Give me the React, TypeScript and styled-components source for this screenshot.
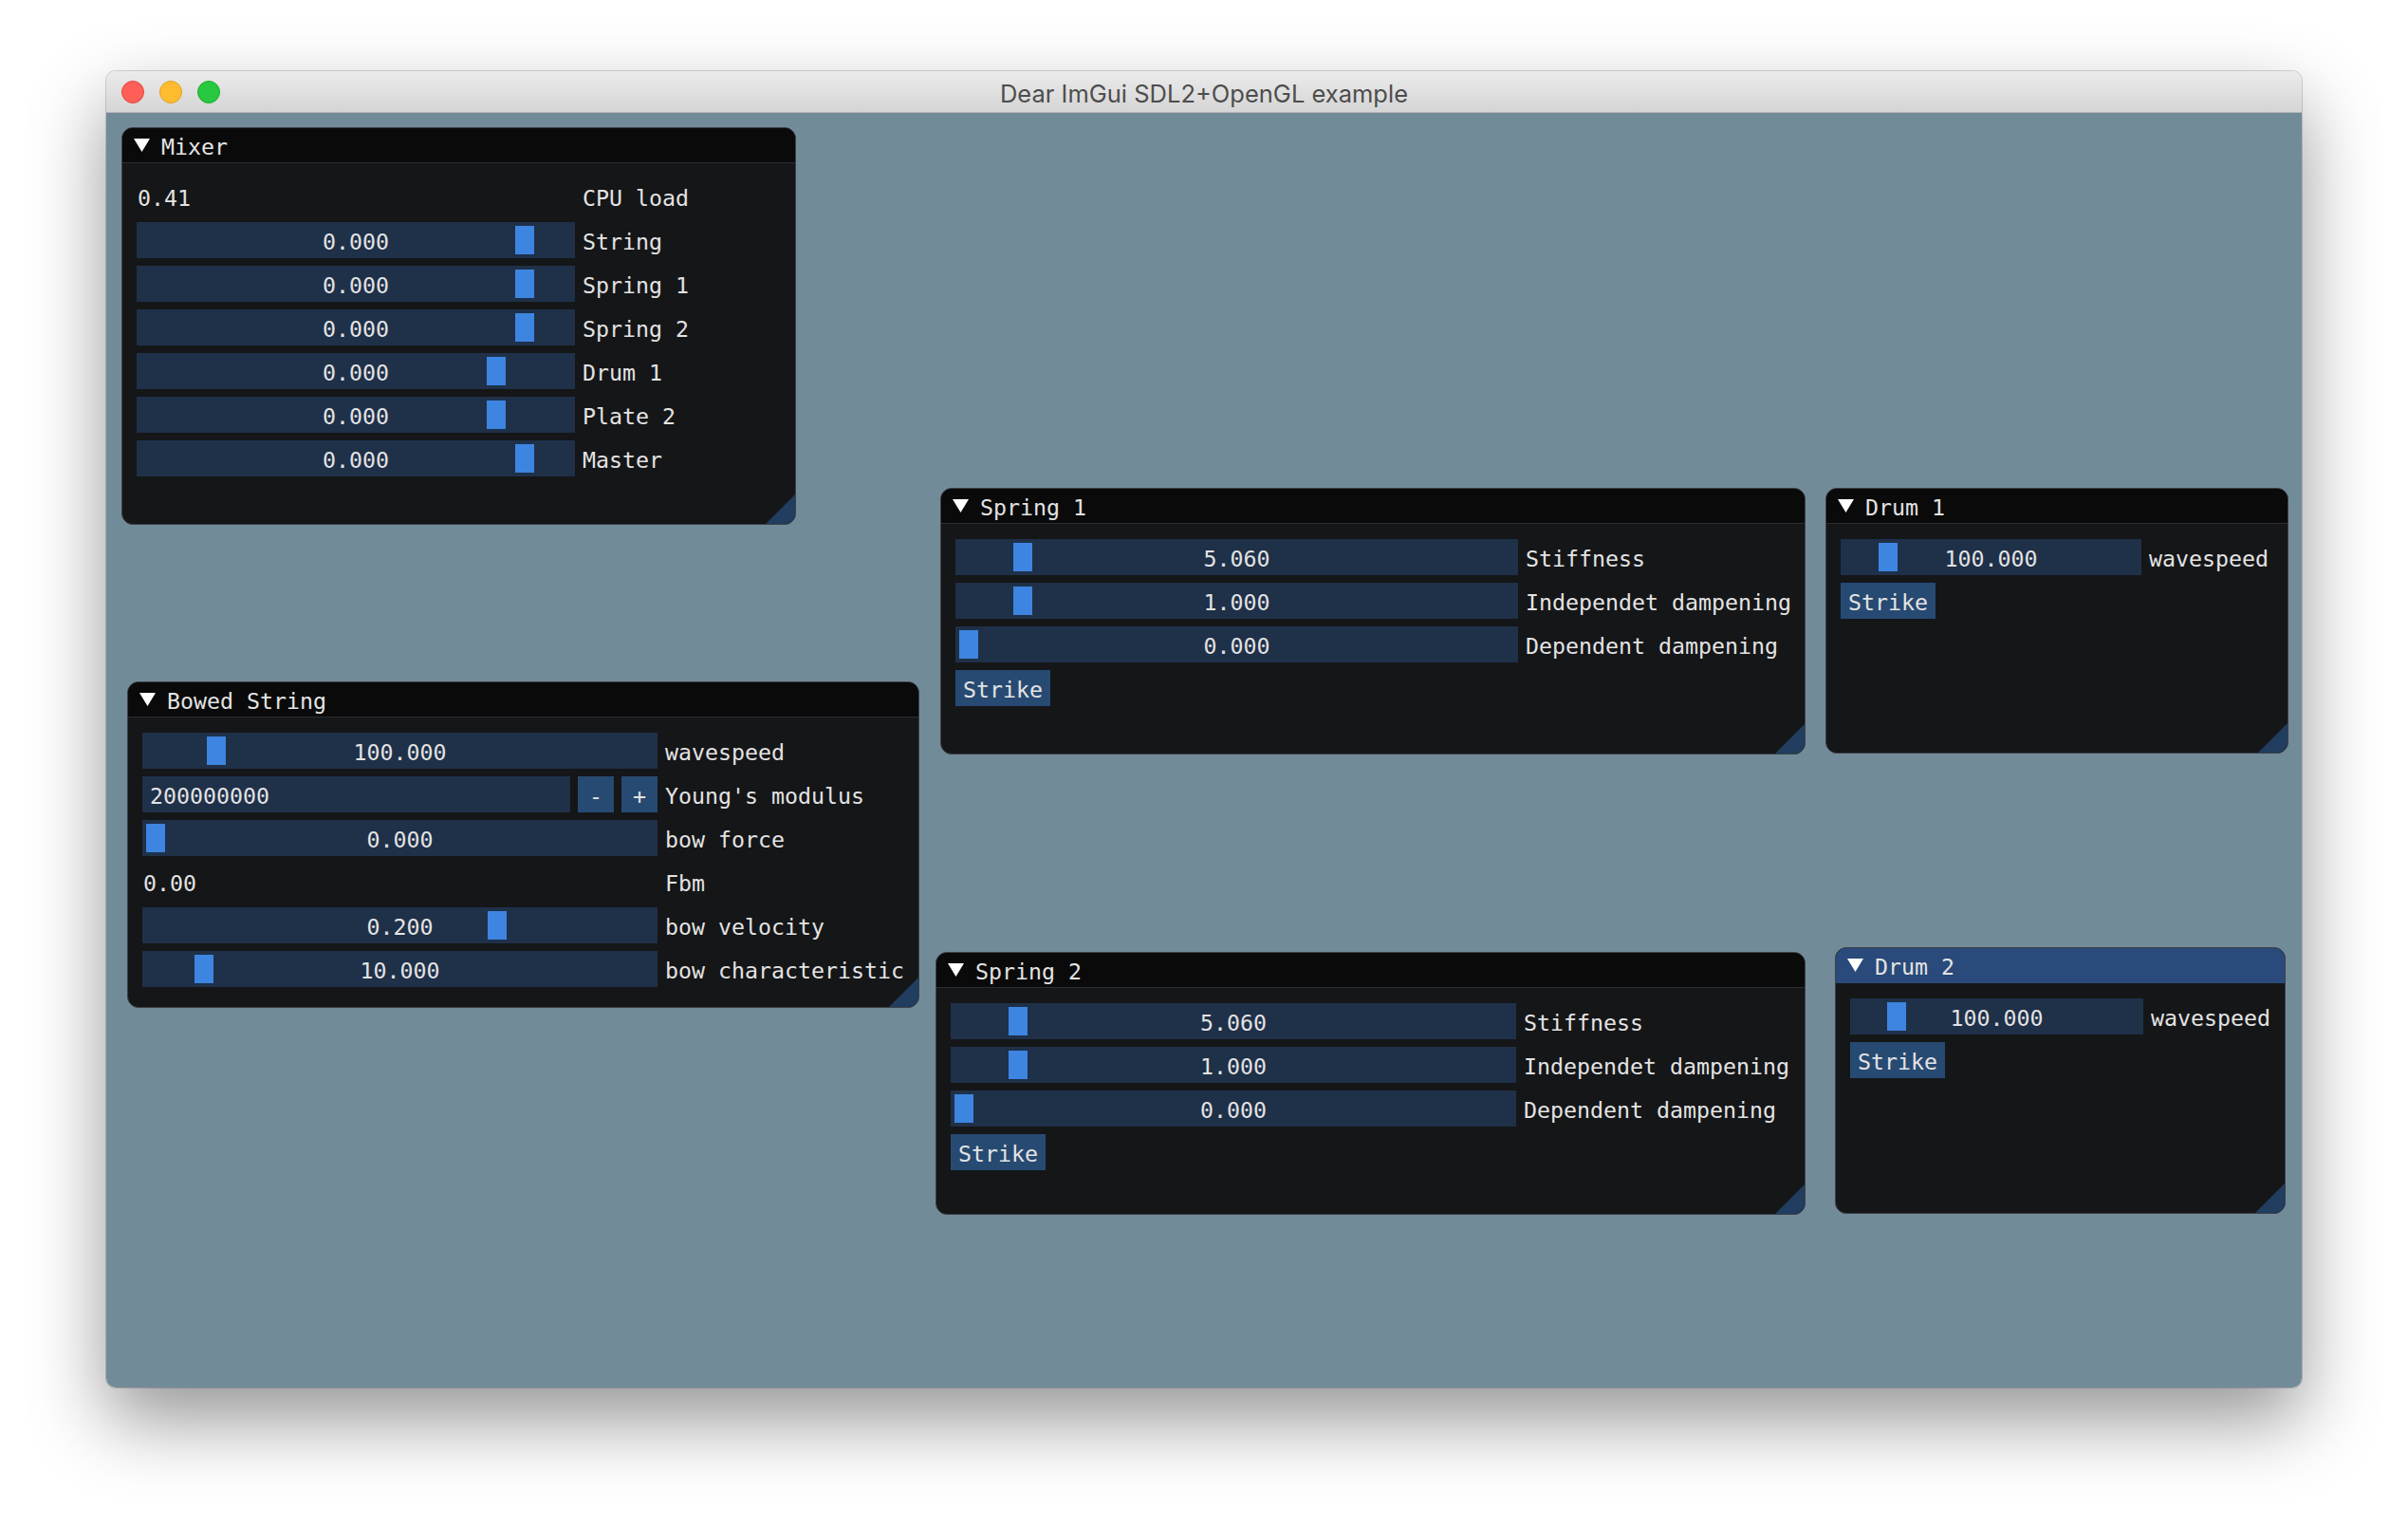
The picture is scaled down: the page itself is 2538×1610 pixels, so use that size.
import React from "react";
import styled, { createGlobalStyle, css } from "styled-components";

const GlobalStyle = createGlobalStyle`
  html, body { margin: 0; padding: 0; background: #ffffff; }
  body { font-family: "DejaVu Sans Mono", "Liberation Mono", monospace; }
`;

const Stage = styled.div`
  width: 2538px;
  height: 1610px;
  box-sizing: border-box;
  padding: 75px 0 0 112px;
  background: #ffffff;
  overflow: hidden;
`;

const MacWindow = styled.div`
  width: 2314px;
  height: 1387px;
  display: flex;
  flex-direction: column;
  border-radius: 10px;
  overflow: hidden;
  box-shadow: 0 0 0 1px rgba(0, 0, 0, 0.16), 0 34px 80px rgba(0, 0, 0, 0.42);
`;

const MacTitleBar = styled.div`
  flex: none;
  height: 44px;
  box-sizing: border-box;
  padding: 0 16px;
  display: grid;
  grid-template-columns: 1fr auto 1fr;
  align-items: center;
  background: linear-gradient(#ebebeb, #d5d5d5);
  border-bottom: 1px solid #b4b4b4;
`;

const Lights = styled.div`
  display: flex;
  gap: 16px;
  align-items: center;
`;

const Light = styled.span<{ $fill: string; $edge: string }>`
  width: 24px;
  height: 24px;
  border-radius: 50%;
  box-sizing: border-box;
  background: ${(p) => p.$fill};
  border: 1px solid ${(p) => p.$edge};
`;

const MacTitle = styled.div`
  font-family: Inter, "Liberation Sans", sans-serif;
  font-size: 25.5px;
  color: #4d4d4d;
  white-space: nowrap;
  padding-top: 4px;
`;

const Canvas = styled.div`
  flex: 1;
  position: relative;
  background: #728b99;
`;

const Panel = styled.section<{ $x: number; $y: number; $w: number; $h: number }>`
  position: absolute;
  left: ${(p) => p.$x}px;
  top: ${(p) => p.$y}px;
  width: ${(p) => p.$w}px;
  height: ${(p) => p.$h}px;
  box-sizing: border-box;
  border: 1px solid #3d4048;
  border-radius: 12px;
  overflow: hidden;
  background: #151618;
  color: #e3e3e3;
  font-family: "DejaVu Sans Mono", "Liberation Mono", monospace;
  font-size: 23.25px;
`;

const TitleBar = styled.header<{ $active?: boolean }>`
  height: 37px;
  box-sizing: border-box;
  display: flex;
  align-items: center;
  gap: 12px;
  padding-left: 12px;
  background: ${(p) => (p.$active ? "#294a7a" : "#0a0a0a")};
  border-bottom: 1px solid ${(p) => (p.$active ? "#2e4d78" : "#2a2d33")};
`;

const TitleText = styled.span`
  height: 36px;
  box-sizing: border-box;
  padding-top: 4px;
  line-height: 32px;
  white-space: nowrap;
`;

const Body = styled.div`
  padding: 16px 15px;
  display: flex;
  flex-direction: column;
  gap: 8px;
`;

const frameText = css`
  height: 38px;
  box-sizing: border-box;
  padding-top: 4px;
  line-height: 34px;
  white-space: nowrap;
`;

const Row = styled.div<{ $item: number }>`
  display: grid;
  grid-template-columns: ${(p) => p.$item}px max-content;
  column-gap: 8px;
  height: 38px;
`;

const Label = styled.span`
  ${frameText};
`;

const PlainValue = styled.span`
  ${frameText};
  padding-left: 1px;
`;

const Slider = styled.div`
  ${frameText};
  position: relative;
  background: #1f3049;
  text-align: center;
`;

const Grab = styled.span<{ $left: number }>`
  position: absolute;
  top: 4px;
  left: ${(p) => p.$left}px;
  width: 20px;
  height: 30px;
  background: #3d85e0;
`;

const SliderValue = styled.span`
  position: relative;
`;

const InputGroup = styled.div`
  display: flex;
  gap: 8px;
`;

const InputBox = styled.div`
  ${frameText};
  flex: 1;
  padding-left: 8px;
  background: #1f3049;
`;

const StepButton = styled.div`
  ${frameText};
  width: 38px;
  flex: none;
  text-align: center;
  background: #274a72;
`;

const StrikeButton = styled.div`
  ${frameText};
  align-self: flex-start;
  padding-left: 8px;
  padding-right: 8px;
  background: #274a72;
`;

const ResizeGrip = styled.span`
  position: absolute;
  right: 0;
  bottom: 0;
  width: 31px;
  height: 31px;
  background: #213d5f;
  clip-path: polygon(100% 0, 100% 100%, 0 100%);
`;

const Arrow = () => (
  <svg width="17" height="14" viewBox="0 0 17 14" style={{ flex: "none" }}>
    <polygon points="0,0 17,0 8.5,14" fill="#ffffff" />
  </svg>
);

type RowDef =
  | { kind: "slider"; value: string; label: string; grab: number }
  | { kind: "text"; value: string; label: string }
  | { kind: "input"; value: string; label: string }
  | { kind: "button"; label: string };

type PanelDef = {
  title: string;
  x: number;
  y: number;
  w: number;
  h: number;
  active?: boolean;
  rows: RowDef[];
};

const panels: PanelDef[] = [
  {
    title: "Mixer",
    x: 16,
    y: 15,
    w: 711,
    h: 419,
    rows: [
      { kind: "text", value: "0.41", label: "CPU load" },
      { kind: "slider", value: "0.000", label: "String", grab: 399 },
      { kind: "slider", value: "0.000", label: "Spring 1", grab: 399 },
      { kind: "slider", value: "0.000", label: "Spring 2", grab: 399 },
      { kind: "slider", value: "0.000", label: "Drum 1", grab: 369 },
      { kind: "slider", value: "0.000", label: "Plate 2", grab: 369 },
      { kind: "slider", value: "0.000", label: "Master", grab: 399 },
    ],
  },
  {
    title: "Bowed String",
    x: 22,
    y: 599,
    w: 835,
    h: 344,
    rows: [
      { kind: "slider", value: "100.000", label: "wavespeed", grab: 68 },
      { kind: "input", value: "200000000", label: "Young's modulus" },
      { kind: "slider", value: "0.000", label: "bow force", grab: 4 },
      { kind: "text", value: "0.00", label: "Fbm" },
      { kind: "slider", value: "0.200", label: "bow velocity", grab: 364 },
      { kind: "slider", value: "10.000", label: "bow characteristic", grab: 55 },
    ],
  },
  {
    title: "Spring 1",
    x: 879,
    y: 395,
    w: 912,
    h: 281,
    rows: [
      { kind: "slider", value: "5.060", label: "Stiffness", grab: 61 },
      { kind: "slider", value: "1.000", label: "Independet dampening", grab: 61 },
      { kind: "slider", value: "0.000", label: "Dependent dampening", grab: 4 },
      { kind: "button", label: "Strike" },
    ],
  },
  {
    title: "Drum 1",
    x: 1812,
    y: 395,
    w: 488,
    h: 280,
    rows: [
      { kind: "slider", value: "100.000", label: "wavespeed", grab: 40 },
      { kind: "button", label: "Strike" },
    ],
  },
  {
    title: "Spring 2",
    x: 874,
    y: 884,
    w: 917,
    h: 277,
    rows: [
      { kind: "slider", value: "5.060", label: "Stiffness", grab: 61 },
      { kind: "slider", value: "1.000", label: "Independet dampening", grab: 61 },
      { kind: "slider", value: "0.000", label: "Dependent dampening", grab: 4 },
      { kind: "button", label: "Strike" },
    ],
  },
  {
    title: "Drum 2",
    x: 1822,
    y: 879,
    w: 475,
    h: 281,
    active: true,
    rows: [
      { kind: "slider", value: "100.000", label: "wavespeed", grab: 39 },
      { kind: "button", label: "Strike" },
    ],
  },
];

const PanelRow = ({ row, item }: { row: RowDef; item: number }) => {
  if (row.kind === "button") return <StrikeButton>{row.label}</StrikeButton>;
  return (
    <Row $item={item}>
      {row.kind === "slider" && (
        <Slider>
          <Grab $left={row.grab} />
          <SliderValue>{row.value}</SliderValue>
        </Slider>
      )}
      {row.kind === "text" && <PlainValue>{row.value}</PlainValue>}
      {row.kind === "input" && (
        <InputGroup>
          <InputBox>{row.value}</InputBox>
          <StepButton>-</StepButton>
          <StepButton>+</StepButton>
        </InputGroup>
      )}
      <Label>{row.label}</Label>
    </Row>
  );
};

const ImWindow = ({ def }: { def: PanelDef }) => {
  const item = Math.round(def.w * 0.65);
  return (
    <Panel $x={def.x} $y={def.y} $w={def.w} $h={def.h}>
      <TitleBar $active={def.active}>
        <Arrow />
        <TitleText>{def.title}</TitleText>
      </TitleBar>
      <Body>
        {def.rows.map((r, i) => (
          <PanelRow key={i} row={r} item={item} />
        ))}
      </Body>
      <ResizeGrip />
    </Panel>
  );
};

export default function App() {
  return (
    <>
      <GlobalStyle />
      <Stage>
        <MacWindow>
          <MacTitleBar>
            <Lights>
              <Light $fill="#ff5f57" $edge="#e2463f" />
              <Light $fill="#febc2e" $edge="#dea123" />
              <Light $fill="#28c840" $edge="#1dad2b" />
            </Lights>
            <MacTitle>Dear ImGui SDL2+OpenGL example</MacTitle>
            <span />
          </MacTitleBar>
          <Canvas>
            {panels.map((p) => (
              <ImWindow key={p.title} def={p} />
            ))}
          </Canvas>
        </MacWindow>
      </Stage>
    </>
  );
}
